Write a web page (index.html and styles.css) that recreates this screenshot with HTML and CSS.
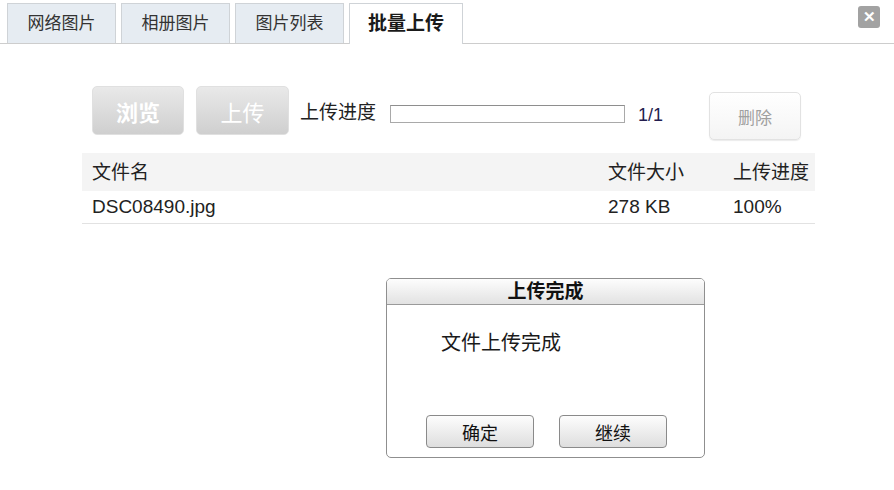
FILE: index.html
```html
<!DOCTYPE html>
<html lang="zh-CN">
<head>
    <meta charset="UTF-8">
    <title>批量上传</title>
    <link rel="stylesheet" href="styles.css">
</head>
<body>

    <div class="tabs">
        <div class="tab">网络图片</div>
        <div class="tab">相册图片</div>
        <div class="tab">图片列表</div>
        <div class="tab active">批量上传</div>
        <div class="close">&#x2715;</div>
    </div>

    <div class="toolbar">
        <button class="btn-big">浏览</button>
        <button class="btn-big btn-upload">上传</button>
        <span class="label">上传进度</span>
        <div class="progress"></div>
        <span class="count">1/1</span>
        <button class="btn-delete">删除</button>
    </div>

    <div class="file-table">
        <div class="row head">
            <span class="col-name">文件名</span>
            <span class="col-size">文件大小</span>
            <span class="col-prog">上传进度</span>
        </div>
        <div class="row">
            <span class="col-name">DSC08490.jpg</span>
            <span class="col-size">278 KB</span>
            <span class="col-prog">100%</span>
        </div>
    </div>

    <div class="dialog">
        <div class="dialog-title">上传完成</div>
        <div class="dialog-body">文件上传完成</div>
        <div class="dialog-buttons">
            <button class="dlg-btn">确定</button>
            <button class="dlg-btn">继续</button>
        </div>
    </div>

</body>
</html>
```
FILE: styles.css
```css
body {
    margin: 0;
    background: #fff;
    font-family: "Liberation Sans", "Noto Sans CJK SC", sans-serif;
    font-size: 19px;
    color: #222;
    position: relative;
    width: 894px;
    height: 490px;
    overflow: hidden;
}

.tabs {
    display: flex;
    gap: 5px;
    padding: 3px 0 0 7px;
    height: 40px;
    border-bottom: 1px solid #cdcdcd;
}

.tab {
    width: 109px;
    height: 40px;
    box-sizing: border-box;
    background: #e6ecf2;
    border: 1px solid #cfd3d7;
    border-bottom: none;
    text-align: center;
    line-height: 40px;
    font-size: 17px;
    color: #333;
}

.tab.active {
    width: 114px;
    background: #fff;
    height: 41px;
    margin-bottom: -1px;
    font-weight: bold;
    font-size: 19px;
    color: #1a1a1a;
}

.close {
    position: absolute;
    left: 858px;
    top: 6px;
    width: 22px;
    height: 22px;
    background: #a2a2a2;
    border-radius: 3px;
    color: #fff;
    font-size: 15px;
    font-weight: bold;
    text-align: center;
    line-height: 22px;
}

.toolbar {
    display: flex;
    align-items: flex-start;
    margin: 42px 0 0 92px;
    height: 67px;
}

button {
    font-family: inherit;
    cursor: pointer;
}

.btn-big {
    width: 92px;
    height: 49px;
    border: 1px solid #e0e0e0;
    border-radius: 5px;
    background: linear-gradient(#e9e9e9, #cfcfcf);
    color: #fff;
    font-size: 22px;
    font-weight: bold;
}

.btn-upload {
    margin-left: 12px;
    width: 93px;
    font-weight: normal;
}

.label {
    margin: 15px 0 0 11px;
    line-height: 24px;
}

.progress {
    margin: 19px 0 0 14px;
    width: 235px;
    height: 18px;
    box-sizing: border-box;
    border: 1px solid #a9a9a9;
    border-top-color: #8e8e8e;
    background: #fff;
}

.count {
    margin: 17px 0 0 13px;
    line-height: 24px;
    font-size: 18px;
    color: #231d4f;
}

.btn-delete {
    margin: 6px 0 0 46px;
    width: 92px;
    height: 48px;
    border: 1px solid #e2e2e2;
    border-radius: 5px;
    background: linear-gradient(#fff, #f4f4f4);
    box-shadow: 0 1px 1px rgba(0, 0, 0, 0.08);
    color: #a0a0a0;
    font-size: 17px;
}

.file-table {
    margin-left: 82px;
    width: 733px;
}

.row {
    display: flex;
    height: 32px;
    line-height: 32px;
    border-bottom: 1px solid #e2e2e2;
}

.row.head {
    height: 38px;
    line-height: 40px;
    background: #f4f4f4;
    border-bottom: none;
}

.col-name {
    width: 516px;
    padding-left: 10px;
}

.col-size {
    width: 125px;
}

.dialog {
    position: absolute;
    left: 386px;
    top: 278px;
    width: 319px;
    height: 180px;
    box-sizing: border-box;
    border: 1px solid #8f8f8f;
    border-radius: 5px;
    background: #fff;
    display: flex;
    flex-direction: column;
}

.dialog-title {
    height: 25px;
    line-height: 26px;
    background: linear-gradient(#fdfdfd, #e2e2e2);
    border-bottom: 1px solid #9a9a9a;
    border-radius: 4px 4px 0 0;
    text-align: center;
    font-weight: bold;
    font-size: 19px;
    color: #111;
}

.dialog-body {
    padding: 22px 0 0 54px;
    flex: 1;
    font-size: 20px;
    color: #1a1a1a;
}

.dialog-buttons {
    display: flex;
    gap: 25px;
    padding: 0 0 9px 39px;
}

.dlg-btn {
    width: 108px;
    height: 33px;
    border: 1px solid #8a8a8a;
    border-radius: 4px;
    background: linear-gradient(#fdfdfd, #dedede);
    font-size: 18px;
    color: #111;
}
```
